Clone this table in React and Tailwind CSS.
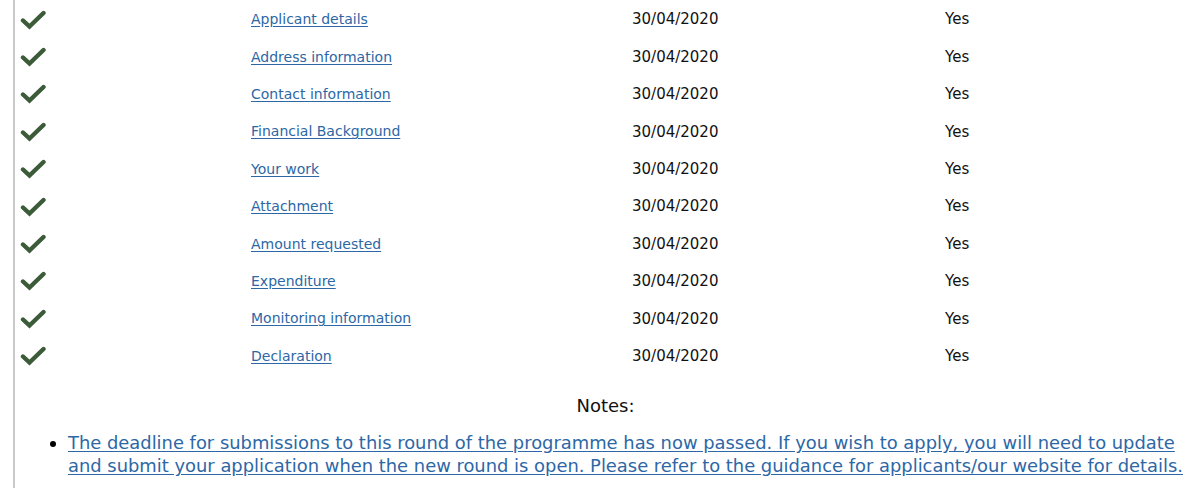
import React from "react";

const sections = [
  "Applicant details",
  "Address information",
  "Contact information",
  "Financial Background",
  "Your work",
  "Attachment",
  "Amount requested",
  "Expenditure",
  "Monitoring information",
  "Declaration",
];

function Tick() {
  return (
    <svg width="27" height="21" viewBox="0 0 27 21" className="block">
      <path
        d="M3 11.5 L9.5 17.5 L23.5 4"
        fill="none"
        stroke="#3b5b39"
        strokeWidth="4.4"
        strokeLinecap="round"
        strokeLinejoin="miter"
      />
    </svg>
  );
}

export default function App() {
  return (
    <div className="w-[1200px] h-[488px] bg-white overflow-hidden font-['DejaVu_Sans',sans-serif]">
      <div className="ml-[13px] border-l-2 border-[#c9c9c9] h-full">
        {/* Section table */}
        <div className="flex flex-col">
          {sections.map((name) => (
            <div
              key={name}
              className="grid grid-cols-[236px_381px_313px_1fr] items-center h-[37.4px] pt-[2px] text-[15px] text-[#111]"
            >
              <div className="pl-[5px] pb-[1px]">
                <Tick />
              </div>
              <a href="#" className="text-[14px] text-[#2d67a6] underline underline-offset-2">
                {name}
              </a>
              <span>30/04/2020</span>
              <span>Yes</span>
            </div>
          ))}
        </div>

        {/* Notes */}
        <div className="pt-[18px]">
          <p className="text-center text-[18px] text-[#111] pr-[4px]">Notes:</p>
          <ul className="list-disc pl-[53px] mt-[12px] text-[17.9px] leading-[23px] text-[#2d67a6] marker:text-black">
            <li>
              <a href="#" className="underline underline-offset-2">
                The deadline for submissions to this round of the programme has now passed. If you wish to apply, you will need to update and submit your application when the new round is open. Please refer to the guidance for applicants/our website for details.
              </a>
            </li>
          </ul>
        </div>
      </div>
    </div>
  );
}
